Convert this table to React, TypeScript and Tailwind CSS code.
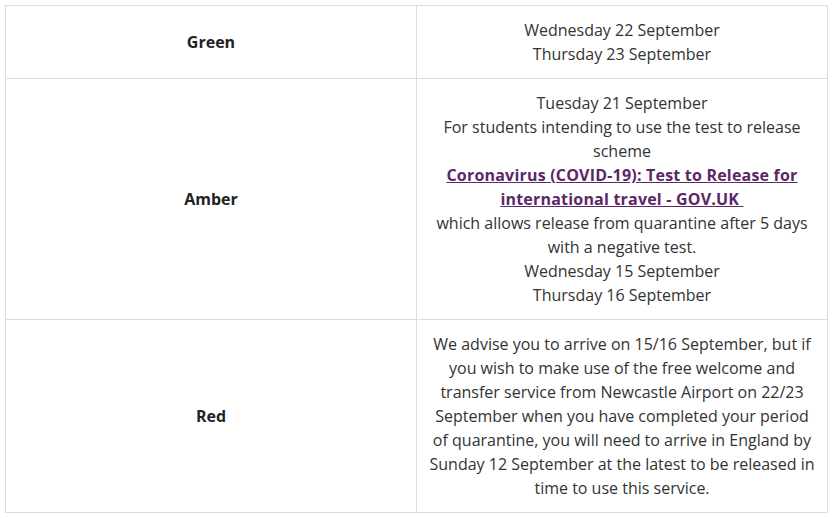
import React from "react"

const cell = "border border-[#dddddd] px-[10px] py-3 text-center align-middle"

const App = () => {
  return (
    <div className="min-h-[518px] bg-white pl-[5px] pt-[5px] font-['Open_Sans',sans-serif] text-base leading-6 text-[#333333]">
      <table className="w-[823px] table-fixed border-collapse">
        <colgroup>
          <col className="w-1/2" />
          <col className="w-1/2" />
        </colgroup>
        <tbody>
          <tr>
            <td className={`${cell} font-bold text-[#222222]`}>Green</td>
            <td className={cell}>
              Wednesday 22 September
              <br />
              Thursday 23 September
            </td>
          </tr>
          <tr>
            <td className={`${cell} font-bold text-[#222222]`}>Amber</td>
            <td className={cell}>
              Tuesday 21 September
              <br />
              For students intending to use the test to release scheme
              <br />
              <a href="#" className="font-bold tracking-[0.2px] text-[#5c2767] underline">
                Coronavirus (COVID-19): Test to Release for international travel - GOV.UK{"\u00A0"}
              </a>
              <br />
              which allows release from quarantine after 5 days with a negative test.
              <br />
              Wednesday 15 September
              <br />
              Thursday 16 September
            </td>
          </tr>
          <tr>
            <td className={`${cell} font-bold text-[#222222]`}>Red</td>
            <td className={cell}>
              We advise you to arrive on 15/16 September, but if you wish to make use of the free
              welcome and transfer service from Newcastle Airport on 22/23 September when you have
              completed your period of quarantine, you will need to arrive in England by Sunday 12
              September at the latest to be released in time to use this service.
            </td>
          </tr>
        </tbody>
      </table>
    </div>
  )
}

export default App
